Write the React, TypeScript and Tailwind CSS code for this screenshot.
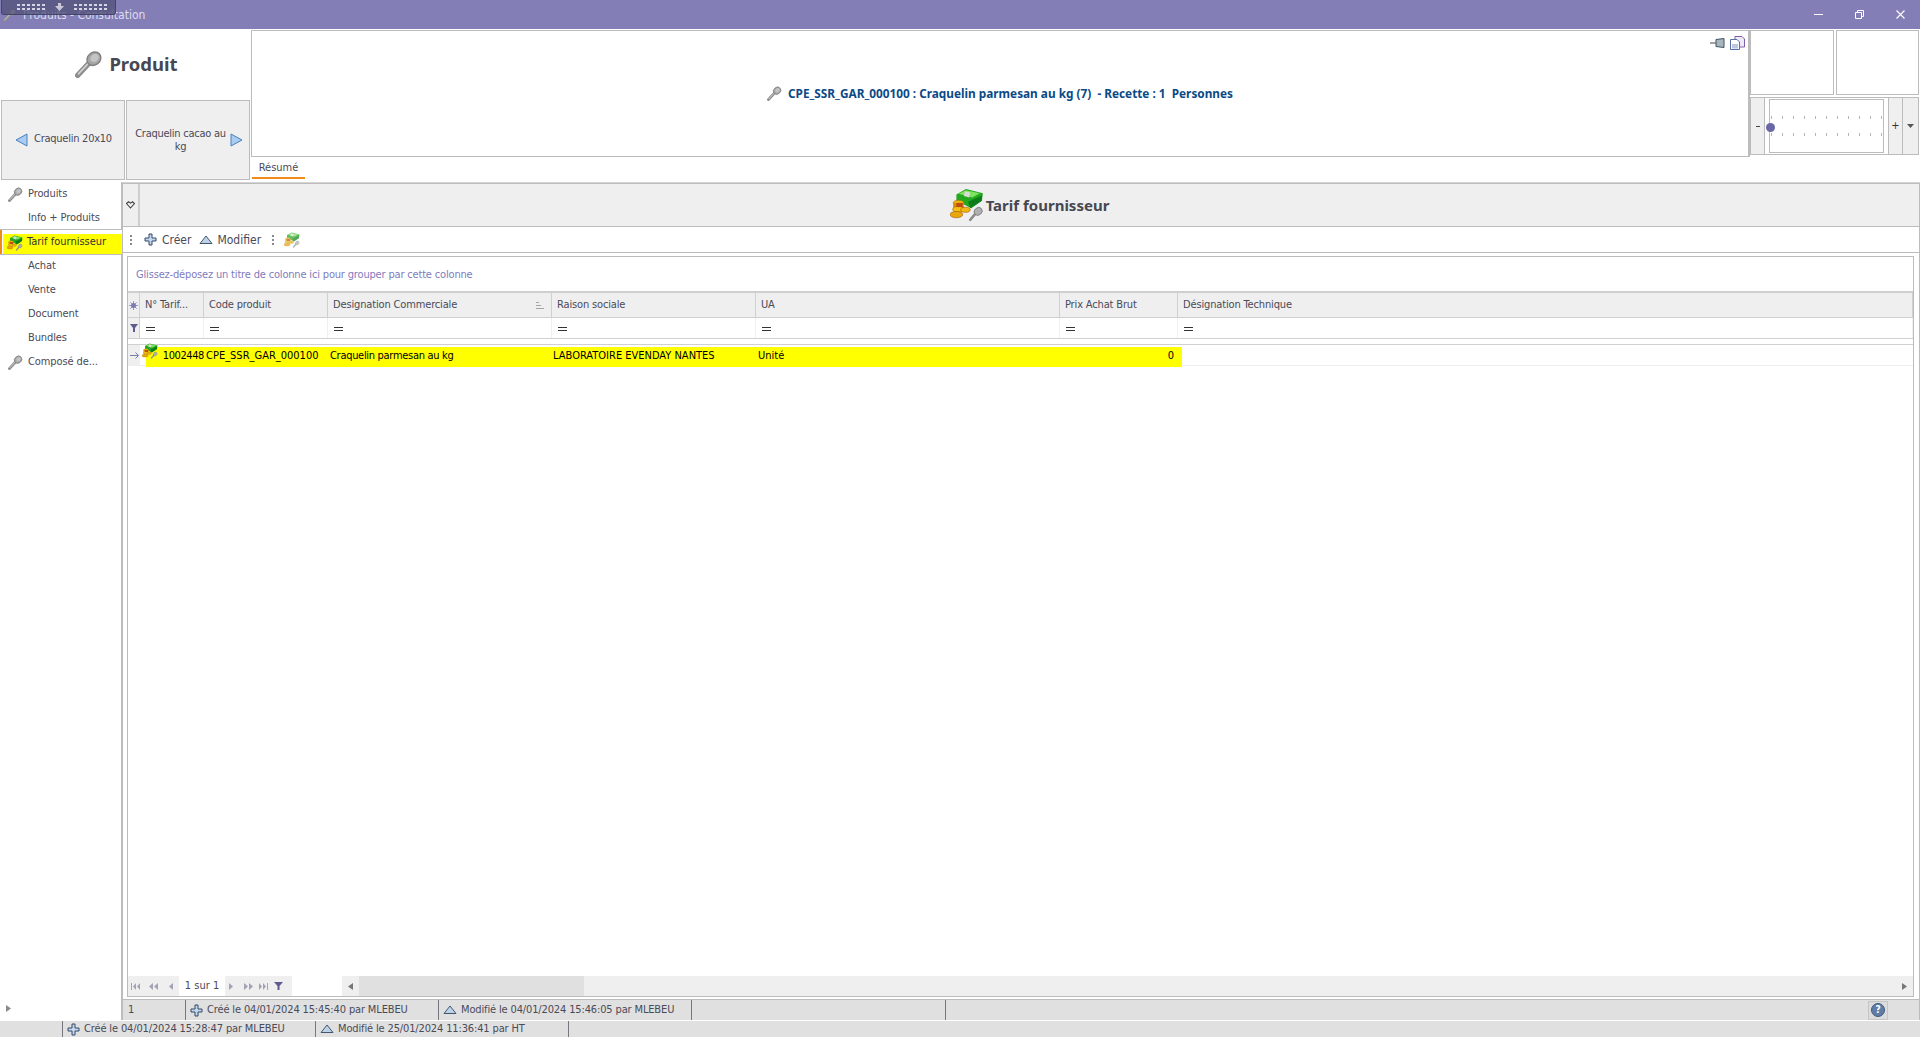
const FONT = 'font-["DejaVu_Sans_Condensed","DejaVu_Sans",sans-serif]'

function NailIcon({ className = 'w-[16px] h-[16px]' }: { className?: string }) {
  return (
    <svg viewBox="0 0 16 16" className={className}>
      <path d="M1.5 14.5 L8 7.5" stroke="#8d8d8d" strokeWidth="3" strokeLinecap="round" />
      <path d="M2 13.6 L8 7.2" stroke="#d0d0d0" strokeWidth="1" strokeLinecap="round" />
      <ellipse cx="10.8" cy="5" rx="4.2" ry="3.6" transform="rotate(-40 10.8 5)" fill="#a6a6a6" stroke="#808080" strokeWidth="0.8" />
      <ellipse cx="11.2" cy="4.6" rx="2.6" ry="2.1" transform="rotate(-40 11.2 4.6)" fill="#c4c4c4" />
    </svg>
  )
}

function MoneyIcon({ className = 'w-[16px] h-[16px]' }: { className?: string }) {
  return (
    <svg viewBox="0 0 32 32" className={className}>
      <path d="M6 6 L15 1 L31 5 L30 12 L20 19 L6 12 Z" fill="#23a81f" />
      <path d="M8 5.5 L15 2 L28 5 L21 9 Z" fill="#7ee35f" />
      <path d="M14 3 L19 4.2 L18 9 L13 7.5 Z" fill="#d9d9d9" />
      <path d="M17 13 L30 7 L30 12 L19 19 Z" fill="#0d7d1b" />
      <ellipse cx="8" cy="14" rx="5" ry="2.5" fill="#f0bb10" stroke="#a86a00" strokeWidth="0.6" />
      <rect x="3" y="14" width="10" height="6" fill="#d99000" />
      <ellipse cx="8" cy="20" rx="5.5" ry="2.8" fill="#f3c215" stroke="#b06a00" strokeWidth="0.6" />
      <ellipse cx="6" cy="25" rx="6" ry="3" fill="#e8a80c" stroke="#a85a00" strokeWidth="0.6" />
      <ellipse cx="14.5" cy="20.5" rx="4.5" ry="2.4" fill="#efb70f" stroke="#a85a00" strokeWidth="0.6" />
      <path d="M6 14 L12 14 L12 18 L6 18 Z" fill="#b8341a" opacity="0.75" />
      <path d="M19 30 L25 23" stroke="#8d8d8d" strokeWidth="2.4" strokeLinecap="round" />
      <ellipse cx="26.5" cy="22" rx="4" ry="3.4" transform="rotate(-40 26.5 22)" fill="#b0b0b0" stroke="#7c7c7c" strokeWidth="0.8" />
    </svg>
  )
}

function PlusIcon() {
  return (
    <svg viewBox="0 0 13 13" className="w-[13px] h-[13px] shrink-0">
      <path d="M5 1 H8 V5 H12 V8 H8 V12 H5 V8 H1 V5 H5 Z" fill="#c4d6ec" stroke="#33496b" strokeWidth="1" />
    </svg>
  )
}

function TriangleIcon() {
  return (
    <svg viewBox="0 0 14 10" className="w-[14px] h-[10px] shrink-0">
      <path d="M7 1 L13 8.5 H1 Z" fill="#bcd2e6" stroke="#44566e" strokeWidth="1" />
    </svg>
  )
}

function Arrow({ dir }: { dir: 'left' | 'right' }) {
  return (
    <svg viewBox="0 0 13 14" className="w-[13px] h-[14px] shrink-0">
      <path
        d={dir === 'left' ? 'M12 1 V13 L1 7 Z' : 'M1 1 V13 L12 7 Z'}
        fill="#a9cdf0"
        stroke="#4a80c0"
        strokeWidth="1"
      />
    </svg>
  )
}

function DotsHandle() {
  return (
    <div className="flex flex-col gap-[2px] mx-[3px]">
      <span className="w-[2px] h-[2px] bg-[#8a8a8a]" />
      <span className="w-[2px] h-[2px] bg-[#8a8a8a]" />
      <span className="w-[2px] h-[2px] bg-[#8a8a8a]" />
    </div>
  )
}

function DotGrid({ count }: { count: number }) {
  return (
    <div className="flex flex-col gap-y-[2px]">
      {[0, 1].map(row => (
        <div key={row} className="flex gap-x-[2px]">
          {Array.from({ length: count }).map((_, i) => (
            <span key={i} className="w-[3px] h-[2px] bg-[#d6d5e4]" />
          ))}
        </div>
      ))}
    </div>
  )
}

function TitleBar() {
  return (
    <div className="relative h-[29px] shrink-0 bg-[#847eb7] flex items-center text-[#dedcee]">
      <NailIcon className="w-[14px] h-[14px] ml-[3px] mr-[6px]" />
      <span className="text-[12px] mt-[1px]">Produits - Consultation</span>
      <div className="ml-auto flex items-center">
        <div className="w-[41px] flex justify-center">
          <span className="w-[9px] h-px bg-white" />
        </div>
        <div className="w-[41px] flex justify-center">
          <svg viewBox="0 0 9 9" className="w-[9px] h-[9px]">
            <path d="M2.5 2.5 V.5 H8.5 V6.5 H6.5 M.5 2.5 H6.5 V8.5 H.5 Z" fill="none" stroke="#fff" />
          </svg>
        </div>
        <div className="w-[41px] mr-[-1px] flex justify-center">
          <svg viewBox="0 0 9 9" className="w-[9px] h-[9px]">
            <path d="M.5 .5 L8.5 8.5 M8.5 .5 L.5 8.5" stroke="#fff" strokeWidth="1.1" />
          </svg>
        </div>
      </div>
      {/* remote session handle */}
      <div className="absolute left-[1px] top-0 w-[115px] h-[15px] bg-[#54527b]/80 border border-t-0 border-[#45446a] rounded-b-[3px] flex items-center pl-[15px] gap-[10px]">
        <DotGrid count={6} />
        <svg viewBox="0 0 9 8" className="w-[9px] h-[8px]">
          <path d="M3 0 H6 V3 H9 L4.5 8 L0 3 H3 Z" fill="#c9c8d8" />
        </svg>
        <DotGrid count={7} />
      </div>
    </div>
  )
}

function SliderTicks() {
  return (
    <div className="flex justify-between">
      {Array.from({ length: 11 }).map((_, i) => (
        <span key={i} className="w-px h-[3px] bg-[#b5b5b5]" />
      ))}
    </div>
  )
}

function TopArea() {
  return (
    <div className="h-[153px] shrink-0 flex bg-white">
      <div className="w-[251px] shrink-0 flex flex-col">
        <div className="h-[71px] flex items-center justify-center gap-[6px] pl-[2px] pb-[2px]">
          <NailIcon className="w-[28px] h-[28px]" />
          <span className='text-[18.5px] font-["Noto_Sans",sans-serif] font-bold text-[#474752]'>Produit</span>
        </div>
        <div className="flex gap-px pl-px h-[80px] text-[11px] tracking-[-0.25px] text-[#4a4a58]">
          <div className="w-[124px] bg-[#efefef] border border-[#bcbcbc] flex items-center pl-[13px] gap-[6px] pb-[1px]">
            <Arrow dir="left" />
            <span>Craquelin 20x10</span>
          </div>
          <div className="w-[124px] bg-[#efefef] border border-[#bcbcbc] flex items-center pl-[4px] pr-[6px]">
            <span className="flex-1 text-center leading-[13px]">Craquelin cacao au kg</span>
            <Arrow dir="right" />
          </div>
        </div>
      </div>
      <div className="flex-1 flex flex-col pt-px">
        <div className="relative h-[127px] border border-[#bcbcbc] border-r-2 flex items-center justify-center gap-[6px]">
          <NailIcon className="w-[15px] h-[15px]" />
          <span className='text-[11.8px] font-["Noto_Sans",sans-serif] font-bold text-[#0b4a86]'>
            CPE_SSR_GAR_000100 : Craquelin parmesan au kg (7)&nbsp; - Recette : 1&nbsp; Personnes
          </span>
          <div className="absolute right-[3px] top-[5px] flex items-center gap-[4px]">
            <svg viewBox="0 0 16 10" className="w-[16px] h-[10px]">
              <path d="M0 5 H6" stroke="#445" />
              <path d="M6 1.5 L14 0.5 V9.5 L6 8.5 Z" fill="#a7b6bd" stroke="#3f5060" />
            </svg>
            <svg viewBox="0 0 15 14" className="w-[15px] h-[14px]">
              <path d="M5 .5 H12 L14.5 3 V11 H5 Z" fill="#efe9f7" stroke="#7f5fa8" />
              <path d="M.5 3.5 H7 L9.5 6 V13.5 H.5 Z" fill="#fff" stroke="#5a6ea8" />
              <rect x="2" y="8" width="6" height="4.5" fill="#bcc7e2" />
            </svg>
          </div>
        </div>
        <div className="h-[22px] flex">
          <div className="w-[53px] ml-px border-b-[2px] border-[#f08a18] flex items-center justify-center pt-[2px] text-[11px] text-[#4a4a58]">
            Résumé
          </div>
        </div>
      </div>
      <div className="w-[170px] shrink-0 flex flex-col gap-[2px] pt-px pr-px">
        <div className="h-[65px] flex gap-[2px]">
          <div className="flex-1 border border-[#bcbcbc]" />
          <div className="flex-1 border border-[#bcbcbc]" />
        </div>
        <div className="h-[58px] border border-[#bcbcbc] flex text-[#555]">
          <div className="w-[14px] bg-[#efefef] border-r border-[#bcbcbc] flex items-center justify-center">
            <span className="w-[4px] h-px bg-[#444]" />
          </div>
          <div className="relative flex-1 mx-[4px] my-[1px] border border-[#bcbcbc] flex flex-col justify-center gap-[14px] px-px">
            <SliderTicks />
            <SliderTicks />
            <span className="absolute left-[-4px] top-[23px] w-[9px] h-[9px] rounded-full bg-[#6a67a5]" />
          </div>
          <div className="w-[15px] bg-[#efefef] border-x border-[#bcbcbc] flex items-center justify-center text-[11px] text-[#333]">
            +
          </div>
          <div className="w-[15px] bg-[#efefef] flex items-center justify-center">
            <svg viewBox="0 0 7 4" className="w-[7px] h-[4px]">
              <path d="M0 0 H7 L3.5 4 Z" fill="#555" />
            </svg>
          </div>
        </div>
      </div>
    </div>
  )
}

const NAV = [
  { label: 'Produits', icon: true },
  { label: 'Info + Produits' },
  { label: 'Tarif fournisseur', active: true },
  { label: 'Achat' },
  { label: 'Vente' },
  { label: 'Document' },
  { label: 'Bundles' },
  { label: 'Composé de...', icon: true },
]

function Sidebar() {
  return (
    <div className="w-[122px] shrink-0 flex flex-col border-r border-[#bcbcbc] relative bg-white mt-[-1px]">
      {NAV.map(item =>
        item.active ? (
          <div key={item.label} className="relative w-[122px] h-[26px] my-[-1px] border-y border-[#bcbcbc] bg-white z-10 flex">
            <span className="w-[2px] bg-[#f08a18]" />
            <div className="self-end flex-1 h-[20px] ml-px bg-[#ffff00] flex items-center gap-[4px] pl-[4px] pb-[3px] text-[11px] text-[#333]">
              <MoneyIcon />
              <span>{item.label}</span>
            </div>
          </div>
        ) : (
          <div key={item.label} className="h-[24px] flex items-center text-[11px] tracking-[-0.1px] text-[#4a4a58]">
            <div className="w-[28px] flex justify-center pl-[2px]">{item.icon && <NailIcon className="w-[15px] h-[15px]" />}</div>
            <span>{item.label}</span>
          </div>
        )
      )}
      <svg viewBox="0 0 5 7" className="absolute left-[6px] bottom-[8px] w-[5px] h-[7px]">
        <path d="M0 0 L5 3.5 L0 7 Z" fill="#8a8a8a" />
      </svg>
    </div>
  )
}

const COLUMNS = [
  { label: 'N° Tarif...', w: 'w-[64px]' },
  { label: 'Code produit', w: 'w-[124px]' },
  { label: 'Designation Commerciale', w: 'w-[224px]', sort: true },
  { label: 'Raison sociale', w: 'w-[204px]' },
  { label: 'UA', w: 'w-[304px]' },
  { label: 'Prix Achat Brut', w: 'w-[118px]' },
  { label: 'Désignation Technique', w: 'flex-1' },
]

function PagerArrows({ items }: { items: string[] }) {
  return (
    <div className="flex items-center gap-[9px] h-full bg-[#efefef] px-[3px] text-[#9a9ab0]">
      {items.map((d, i) => (
        <svg key={i} viewBox="0 0 9 7" className="w-[9px] h-[7px]">
          <path d={d} fill="#a3a3b5" />
        </svg>
      ))}
    </div>
  )
}

function DataGrid() {
  return (
    <div className="flex-1 min-h-0 ml-[4px] mr-[5px] border border-[#bcbcbc] flex flex-col bg-white">
      <div className="h-[36px] shrink-0 flex items-center pl-[8px] pt-[3px] text-[11px] tracking-[-0.17px] text-[#7f7bbd] border-b-2 border-[#cfcfcf]">
        Glissez-déposez un titre de colonne ici pour grouper par cette colonne
      </div>

      {/* header */}
      <div className="h-[25px] shrink-0 flex bg-[#efefef] border-b border-[#d0d0d0] text-[11px] tracking-[-0.15px] text-[#4a4a58]">
        <div className="w-[12px] shrink-0 border-r border-[#d0d0d0] flex items-center justify-center">
          <svg viewBox="0 0 9 9" className="w-[9px] h-[9px]">
            <path d="M4.5 0 V9 M0 4.5 H9 M1.3 1.3 L7.7 7.7 M7.7 1.3 L1.3 7.7" stroke="#9a97c4" />
            <circle cx="4.5" cy="4.5" r="2.5" fill="#7d7ab0" />
          </svg>
        </div>
        {COLUMNS.map(c => (
          <div key={c.label} className={`${c.w} shrink-0 border-r border-[#d0d0d0] flex items-center pl-[5px] pr-[6px] pt-px justify-between`}>
            <span className="whitespace-nowrap">{c.label}</span>
            {c.sort && (
              <svg viewBox="0 0 8 7" className="w-[8px] h-[7px] mr-[1px]">
                <path d="M0 .5 H3 M0 3.5 H5 M0 6.5 H8" stroke="#a5a5a5" />
              </svg>
            )}
          </div>
        ))}
      </div>

      {/* filter row */}
      <div className="h-[21px] shrink-0 flex border-b border-[#d0d0d0]">
        <div className="w-[12px] shrink-0 bg-[#efefef] flex items-center justify-center border-r border-[#d0d0d0]">
          <svg viewBox="0 0 8 8" className="w-[8px] h-[8px]">
            <path d="M0 0 H8 L5 4 V8 H3 V4 Z" fill="#5d5a90" />
          </svg>
        </div>
        {COLUMNS.map(c => (
          <div key={c.label} className={`${c.w} shrink-0 border-r border-[#f0f0f0] flex items-center pl-[6px] pt-[2px]`}>
            <span className="w-[9px] h-[4px] border-y border-[#333]" />
          </div>
        ))}
      </div>

      <div className="h-[6px] shrink-0 border-b border-[#d0d0d0]" />

      {/* data row */}
      <div className="relative h-[21px] shrink-0 flex border-b border-[#eeeeee] text-[11px] text-black">
        <span className="absolute left-[18px] top-[2px] w-[1036px] h-[20px] bg-[#ffff00]" />
        <div className="w-[12px] shrink-0 bg-[#efefef] flex items-center justify-center relative">
          <svg viewBox="0 0 9 7" className="w-[9px] h-[7px]">
            <path d="M0 3.5 H8 M5.5 .5 L8.5 3.5 L5.5 6.5" stroke="#7b7ba8" fill="none" />
          </svg>
        </div>
        <div className="relative w-[64px] shrink-0 flex items-center pl-[2px] pt-[2px]">
          <MoneyIcon className="w-[16px] h-[16px] mt-[-10px]" />
          <span className="ml-auto tracking-[-0.4px]">1002448</span>
        </div>
        <div className="relative w-[124px] shrink-0 flex items-center pl-[2px] pt-[2px]">CPE_SSR_GAR_000100</div>
        <div className="relative w-[224px] shrink-0 flex items-center pl-[2px] pt-[2px] tracking-[-0.3px]">Craquelin parmesan au kg</div>
        <div className="relative w-[204px] shrink-0 flex items-center pl-[1px] pt-[2px]">LABORATOIRE EVENDAY NANTES</div>
        <div className="relative w-[304px] shrink-0 flex items-center pl-[2px] pt-[2px]">Unité</div>
        <div className="relative w-[118px] shrink-0 flex items-center justify-end pr-[4px] pt-[2px]">0</div>
      </div>

      <div className="flex-1" />

      {/* pager + horizontal scrollbar */}
      <div className="h-[20px] shrink-0 flex items-center text-[11px] text-[#4a4a58]">
        <PagerArrows items={['M0 0 H1 V7 H0 Z M5 0 V7 L2 3.5 Z M9 0 V7 L6 3.5 Z', 'M4 0 V7 L0 3.5 Z M9 0 V7 L5 3.5 Z', 'M6 0 V7 L2 3.5 Z']} />
        <span className="w-[46px] text-center shrink-0">1 sur 1</span>
        <div className="flex items-center gap-[6px] h-full bg-[#efefef] w-[67px] pl-[4px]">
          <svg viewBox="0 0 4 7" className="w-[4px] h-[7px]"><path d="M0 0 V7 L4 3.5 Z" fill="#a3a3b5" /></svg>
          <svg viewBox="0 0 9 7" className="w-[9px] h-[7px] ml-[5px]"><path d="M0 0 V7 L4 3.5 Z M5 0 V7 L9 3.5 Z" fill="#a3a3b5" /></svg>
          <svg viewBox="0 0 9 7" className="w-[9px] h-[7px]"><path d="M0 0 V7 L3 3.5 Z M4 0 V7 L7 3.5 Z M8 0 H9 V7 H8 Z" fill="#a3a3b5" /></svg>
          <svg viewBox="0 0 9 8" className="w-[9px] h-[8px]"><path d="M0 0 H9 L5.5 4 V8 H3.5 V4 Z" fill="#5d5a90" /></svg>
        </div>
        <div className="w-[50px] shrink-0" />
        <div className="flex-1 h-full flex bg-[#efefef]">
          <div className="w-[17px] flex items-center justify-center">
            <svg viewBox="0 0 5 7" className="w-[5px] h-[7px]"><path d="M5 0 V7 L0 3.5 Z" fill="#777" /></svg>
          </div>
          <div className="w-[225px] bg-[#e0e0e0]" />
          <div className="flex-1" />
          <div className="w-[17px] flex items-center justify-center">
            <svg viewBox="0 0 5 7" className="w-[5px] h-[7px]"><path d="M0 0 V7 L5 3.5 Z" fill="#777" /></svg>
          </div>
        </div>
      </div>
    </div>
  )
}

function StatusText({ children, w, icon }: { children: string; w: string; icon: 'plus' | 'tri' }) {
  return (
    <div className={`${w} shrink-0 h-full border-l border-[#77777f] flex items-center gap-[4px] pl-[4px] whitespace-nowrap tracking-[-0.14px]`}>
      {icon === 'plus' ? <PlusIcon /> : <TriangleIcon />}
      <span>{children}</span>
    </div>
  )
}

function MainPanel() {
  return (
    <div className="flex-1 min-w-0 flex flex-col bg-white border-x border-[#bcbcbc]">
      <div className="h-[44px] shrink-0 flex border-y border-[#bcbcbc]">
        <div className="w-[17px] bg-[#efefef] border-r-2 border-[#cfcfcf] flex items-center justify-center">
          <svg viewBox="0 0 9 9" className="w-[9px] h-[9px]">
            <path d="M.5 2.5 L2.5 .8 L4.5 2.2 L6.5 .8 L8.5 2.5 L4.5 7 Z" fill="none" stroke="#444" strokeWidth="1.1" />
          </svg>
        </div>
        <div className="flex-1 bg-[#efefef] flex items-center justify-center gap-[2px]">
          <MoneyIcon className="w-[34px] h-[34px]" />
          <span className='text-[15px] font-["Noto_Sans",sans-serif] font-bold text-[#474752]'>Tarif fournisseur</span>
        </div>
      </div>

      <div className="h-[26px] shrink-0 flex items-center pl-[4px] text-[12px] text-[#4a4a58] mb-[3px] border-b border-[#bcbcbc]">
        <DotsHandle />
        <div className="ml-[9px] flex items-center gap-[5px]">
          <PlusIcon />
          <span>Créer</span>
        </div>
        <div className="ml-[8px] flex items-center gap-[4px]">
          <TriangleIcon />
          <span>Modifier</span>
        </div>
        <div className="ml-[8px]"><DotsHandle /></div>
        <div className="ml-[7px] opacity-70"><MoneyIcon /></div>
      </div>

      <DataGrid />

      <div className="h-[21px] shrink-0 mt-[2px] border-t border-[#bcbcbc] bg-[#e0e0e0] flex items-center text-[11px] text-[#4a4a58] relative">
        <div className="w-[62px] shrink-0 pl-[5px]">1</div>
        <StatusText w="w-[253px]" icon="plus">Créé le 04/01/2024 15:45:40 par MLEBEU</StatusText>
        <StatusText w="w-[253px]" icon="tri">Modifié le 04/01/2024 15:46:05 par MLEBEU</StatusText>
        <div className="w-[254px] shrink-0 h-full border-l border-[#77777f]" />
        <div className="h-full border-l border-[#77777f]" />
        <div className="ml-auto mr-[31px] w-[20px] h-[19px] border border-[#c6c6c6] bg-[#dcdcdc] flex items-center justify-center">
          <span className="w-[14px] h-[14px] rounded-full bg-[#5f7da6] border border-[#3f5a80] flex items-center justify-center text-[10px] font-bold text-white leading-none">?</span>
        </div>
      </div>
    </div>
  )
}

export default function App() {
  return (
    <div className={`w-[1920px] h-[1037px] overflow-hidden flex flex-col bg-white ${FONT}`}>
      <TitleBar />
      <TopArea />
      <div className="flex-1 min-h-0 flex border-t border-[#d4d4d4] border-b border-b-white">
        <Sidebar />
        <MainPanel />
      </div>
      <div className="h-[16px] shrink-0 bg-[#e0e0e0] flex items-center text-[11px] text-[#4a4a58] pl-[62px]">
        <StatusText w="w-[253px]" icon="plus">Créé le 04/01/2024 15:28:47 par MLEBEU</StatusText>
        <StatusText w="w-[253px]" icon="tri">Modifié le 25/01/2024 11:36:41 par HT</StatusText>
        <div className="h-full border-l border-[#77777f]" />
      </div>
    </div>
  )
}
